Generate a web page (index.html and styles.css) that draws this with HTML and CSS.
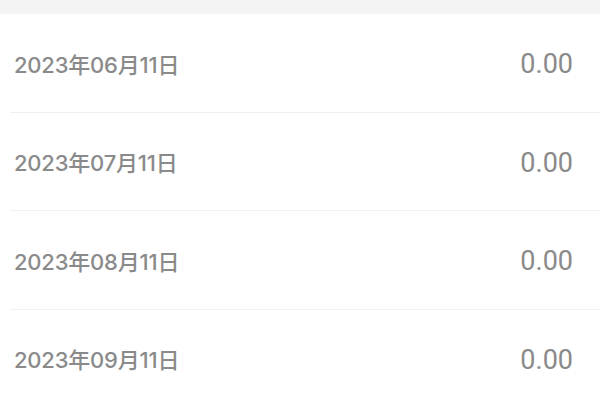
FILE: index.html
```
<!DOCTYPE html>
<html lang="zh">
<head>
<meta charset="utf-8">
<link rel="stylesheet" href="styles.css">
</head>
<body>
<div class="top"></div>
<ul class="list">
  <li class="row"><span class="date">2023年06月11日</span><span class="amount">0.00</span></li>
  <li class="row"><span class="date">2023年07月11日</span><span class="amount">0.00</span></li>
  <li class="row"><span class="date">2023年08月11日</span><span class="amount">0.00</span></li>
  <li class="row"><span class="date">2023年09月11日</span><span class="amount">0.00</span></li>
</ul>
</body>
</html>
```
FILE: styles.css
```
html, body {
  margin: 0;
  padding: 0;
  background: #ffffff;
}
.top {
  height: 14px;
  background: #f4f4f4;
}
.list {
  list-style: none;
  margin: 0;
  padding: 0 0 0 10px;
}
.row {
  display: flex;
  align-items: center;
  justify-content: space-between;
  height: 97.5px;
  padding: 0 27px 0 4px;
  border-bottom: 1px solid #f0f0f0;
}
.date {
  font-family: Inter, "Noto Sans CJK SC", sans-serif;
  font-size: 22px;
  font-weight: 500;
  color: #8a8a8a;
  letter-spacing: -0.2px;
}
.amount {
  font-family: Roboto, "Noto Sans", sans-serif;
  font-size: 27px;
  color: #8a8a8a;
  padding-top: 3px;
}
```
